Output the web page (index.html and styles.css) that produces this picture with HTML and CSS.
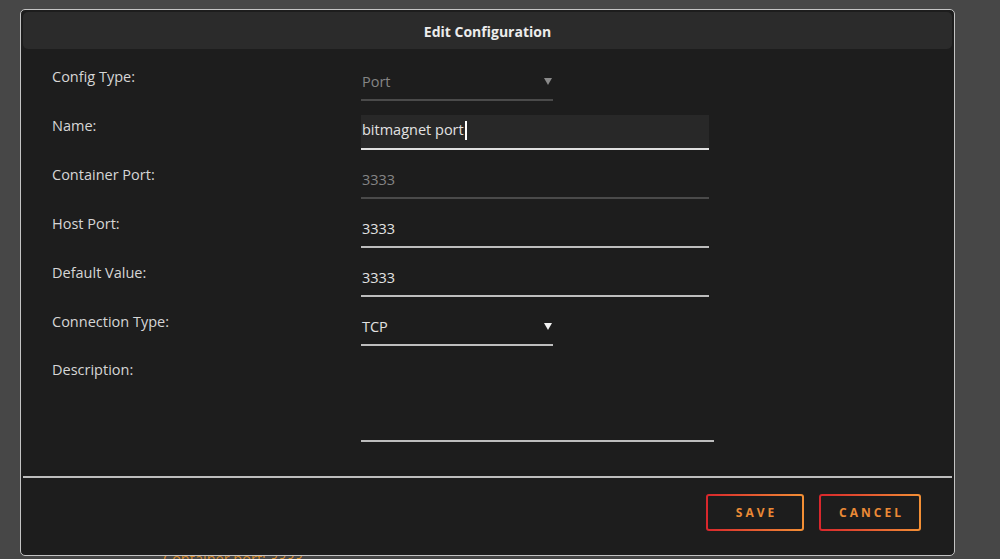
FILE: index.html
```html
<!DOCTYPE html>
<html lang="en">
<head>
    <meta charset="UTF-8">
    <meta name="viewport" content="width=device-width, initial-scale=1.0">
    <title>Edit Configuration</title>
    <link rel="stylesheet" href="styles.css">
</head>
<body>
    <div class="behind">Container port: 3333</div>

    <div class="dialog">
        <div class="dialog-header">Edit Configuration</div>

        <div class="form">
            <div class="row">
                <div class="label">Config Type:</div>
                <div class="field select disabled">Port</div>
            </div>
            <div class="row">
                <div class="label">Name:</div>
                <div class="field active">bitmagnet port<span class="caret"></span></div>
            </div>
            <div class="row">
                <div class="label">Container Port:</div>
                <div class="field disabled">3333</div>
            </div>
            <div class="row">
                <div class="label">Host Port:</div>
                <div class="field">3333</div>
            </div>
            <div class="row">
                <div class="label">Default Value:</div>
                <div class="field">3333</div>
            </div>
            <div class="row">
                <div class="label">Connection Type:</div>
                <div class="field select">TCP</div>
            </div>
            <div class="row">
                <div class="label">Description:</div>
                <div class="field textarea"></div>
            </div>
        </div>

        <div class="dialog-footer">
            <button class="btn save">SAVE</button>
            <button class="btn cancel">CANCEL</button>
        </div>
    </div>
</body>
</html>
```

FILE: styles.css
```css
body {
    margin: 0;
    height: 559px;
    overflow: hidden;
    position: relative;
    background-color: #474747;
    font-family: "Open Sans", "Noto Sans", sans-serif;
    font-size: 14.5px;
}
.behind {
    padding: 549px 0 0 163px;
    line-height: 20px;
    color: #d48a2c;
}
.dialog {
    position: absolute;
    left: 20px;
    top: 9px;
    width: 935px;
    height: 547px;
    box-sizing: border-box;
    border: 1px solid #c4c4c4;
    border-radius: 5px;
    background-color: #1d1d1d;
    padding: 2px;
    display: flex;
    flex-direction: column;
}
.dialog-header {
    height: 37px;
    flex-shrink: 0;
    background-color: #2b2b2b;
    border-radius: 5px;
    display: flex;
    align-items: center;
    justify-content: center;
    color: #ececec;
    font-size: 14px;
    font-weight: 700;
    padding-top: 1px;
    box-sizing: border-box;
}
.form {
    flex: 1;
    padding: 17px 0 0 29px;
}
.row {
    display: grid;
    grid-template-columns: 309px 1fr;
    margin-bottom: 14px;
}
.row:nth-child(6) {
    margin-bottom: 13px;
}
.label {
    padding-top: 1px;
    line-height: 20px;
    color: #d6d6d6;
}
.field {
    position: relative;
    width: 348px;
    height: 35px;
    box-sizing: border-box;
    padding: 6px 0 0 1px;
    line-height: 20px;
    color: #e2e2e2;
    border-bottom: 2px solid #bdbdbd;
}
.field.disabled {
    color: #858585;
    border-bottom-color: #4a4a4a;
}
.field.active {
    padding-top: 5px;
    background-color: #282828;
    border-bottom-color: #e0e0e0;
}
.caret {
    display: inline-block;
    width: 2px;
    height: 19px;
    margin-left: 1px;
    vertical-align: -5px;
    background-color: #ffffff;
}
.field.select {
    width: 192px;
}
.field.select::after {
    content: "";
    position: absolute;
    right: 1px;
    top: 12px;
    border-left: 4px solid transparent;
    border-right: 4px solid transparent;
    border-top: 7px solid #f2f2f2;
}
.field.select.disabled::after {
    border-top-color: #8a8a8a;
}
.field.textarea {
    width: 353px;
    height: 83px;
}
.dialog-footer {
    flex-shrink: 0;
    border-top: 2px solid #bdbdbd;
    padding: 16px 31px 22px 0;
    display: flex;
    justify-content: flex-end;
    gap: 15px;
}
.btn {
    height: 37px;
    box-sizing: border-box;
    border: 2px solid transparent;
    border-radius: 3px;
    background: linear-gradient(#1d1d1d, #1d1d1d) padding-box,
                linear-gradient(90deg, #d8262c, #f39035) border-box;
    color: #eb8a36;
    font-family: "Open Sans", sans-serif;
    font-size: 12px;
    font-weight: 700;
    letter-spacing: 3px;
    padding: 0 0 0 3px;
}
.btn.save {
    width: 98px;
}
.btn.cancel {
    width: 102px;
}
```
